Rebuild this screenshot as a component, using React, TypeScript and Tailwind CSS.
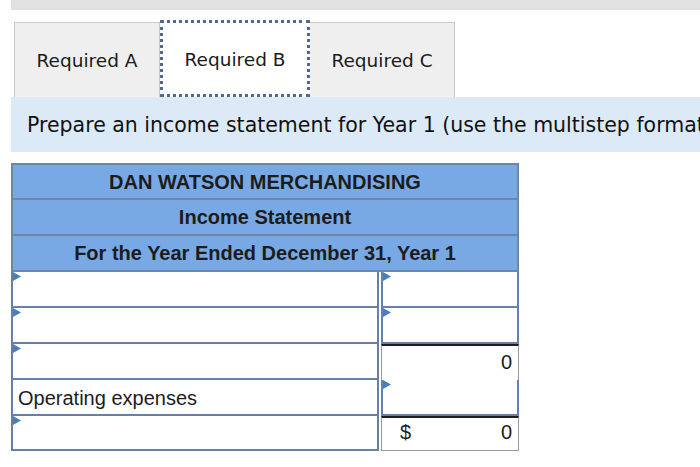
import React from 'react';

const Marker = () => (
  <svg className="absolute left-0 top-0" width="8" height="10" viewBox="0 0 8 10">
    <path d="M0 0 L8 4.5 L0 9 Z" fill="#4a7cc0" />
  </svg>
);

type Row = { label?: string; labelInput?: boolean; valueInput?: boolean; value?: string; dollar?: boolean; last?: boolean };

const rows: Row[] = [
  { labelInput: true, valueInput: true },
  { labelInput: true, valueInput: true },
  { labelInput: true, value: '0' },
  { label: 'Operating expenses', valueInput: true },
  { labelInput: true, value: '0', dollar: true, last: true },
];

const App: React.FC = () => {
  return (
    <div className="w-[700px] h-[467px] overflow-hidden bg-white relative">
      <div className="ml-[11px] h-[10px] bg-[#e1e1e1]" />

      <div className="ml-[14px] mt-[10px] flex items-end h-[77px]" style={{ fontFamily: '"DejaVu Sans", Verdana, sans-serif' }}>
        <div className="w-[146px] h-[75px] bg-[#efefef] border border-b-0 border-[#c8c8c8] flex items-center justify-center text-[18.5px] text-[#1a1a1a] pt-[1px]">
          Required A
        </div>
        <div className="w-[150px] h-[77px] bg-white border-[3px] border-dotted border-[#4f6990] flex items-center justify-center text-[18.5px] text-[#1a1a1a] pt-[3px]">
          Required B
        </div>
        <div className="w-[145px] h-[75px] bg-[#efefef] border border-b-0 border-l-0 border-[#c8c8c8] flex items-center justify-center text-[18.5px] text-[#1a1a1a] pt-[1px]">
          Required C
        </div>
      </div>

      <div
        className="ml-[11px] h-[55px] bg-[#dceaf8] flex items-center pl-[16px] pt-[2px] whitespace-nowrap overflow-hidden text-[20.5px] text-[#111]"
        style={{ fontFamily: '"DejaVu Sans", Verdana, sans-serif' }}
      >
        Prepare an income statement for Year 1 (use the multistep format)
      </div>

      <div className="ml-[11px] mt-[11px] w-[508px]" style={{ fontFamily: '"Liberation Sans", Arial, sans-serif' }}>
        <div className="border-2 border-[#6e86ab] bg-[#79a9e4]">
          <div className="h-[35px] flex items-center justify-center font-bold text-[20px] text-[#1c1c1c] border-b-2 border-[#6e86ab]">
            DAN WATSON MERCHANDISING
          </div>
          <div className="h-[36px] flex items-center justify-center font-bold text-[20px] text-[#1c1c1c] border-b-2 border-[#6e86ab]">
            Income Statement
          </div>
          <div className="h-[34px] flex items-center justify-center font-bold text-[20px] text-[#1c1c1c]">
            For the Year Ended December 31, Year 1
          </div>
        </div>

        {rows.map((r, i) => (
          <div key={i} className={`flex ${r.last ? 'h-[35px]' : 'h-[36px]'}`}>
            <div className="relative w-[368px] border-2 border-t-0 border-[#6581ab] bg-white flex items-center pl-[5px] pt-[2px] text-[20px] text-[#1c1c1c]">
              {r.labelInput && <Marker />}
              {r.label}
            </div>
            {r.valueInput ? (
              <div className="relative flex-1 ml-[2px] border-2 border-t-0 border-[#6581ab] bg-white">
                <Marker />
              </div>
            ) : (
              <div
                className={`relative flex-1 ml-[2px] border-t-2 border-t-[#1f1f1f] border-x border-x-[#9a9a9a] ${
                  r.last ? 'border-b border-b-[#9a9a9a]' : ''
                } bg-white flex items-end justify-between pb-[3px] pl-[18px] pr-[6px] text-[20px] text-[#1c1c1c]`}
              >
                <span>{r.dollar ? '$' : ''}</span>
                <span>{r.value}</span>
              </div>
            )}
          </div>
        ))}
      </div>
    </div>
  );
};

export default App;
